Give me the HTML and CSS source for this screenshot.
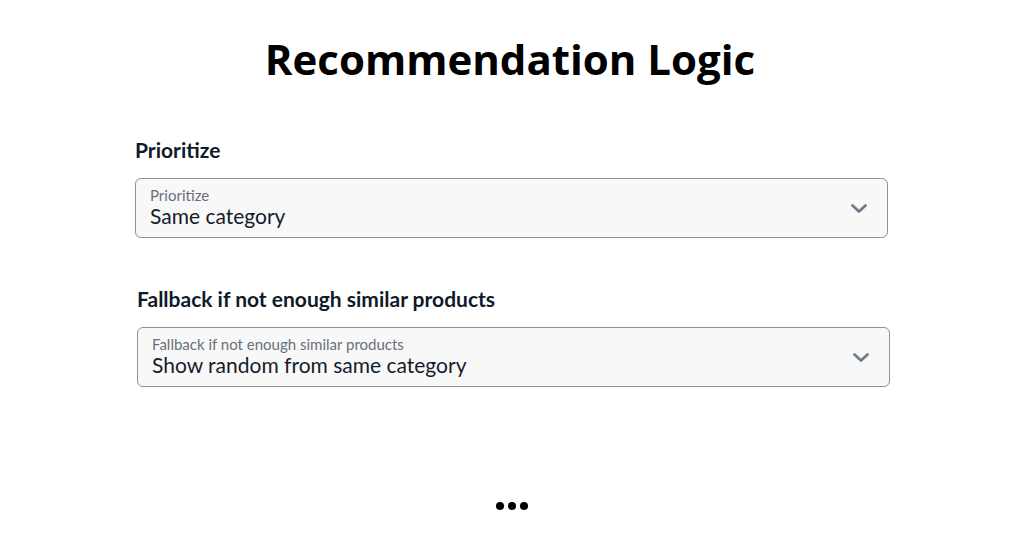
FILE: index.html
```html
<!DOCTYPE html>
<html>
<head>
<meta charset="utf-8">
<link rel="stylesheet" href="styles.css">
</head>
<body>
<main class="page">
  <h1 class="title">Recommendation Logic</h1>
  <section class="field first">
    <h2 class="field-title">Prioritize</h2>
    <div class="select">
      <div class="select-text">
        <span class="select-label">Prioritize</span>
        <span class="select-value">Same category</span>
      </div>
      <svg class="chevron" width="18" height="11" viewBox="0 0 18 11"><path d="M2.5 2.5 L9 8.5 L15.5 2.5" fill="none" stroke="#6f7d8b" stroke-width="2.8" stroke-linecap="round" stroke-linejoin="round"/></svg>
    </div>
  </section>
  <section class="field second">
    <h2 class="field-title">Fallback if not enough similar products</h2>
    <div class="select">
      <div class="select-text">
        <span class="select-label">Fallback if not enough similar products</span>
        <span class="select-value">Show random from same category</span>
      </div>
      <svg class="chevron" width="18" height="11" viewBox="0 0 18 11"><path d="M2.5 2.5 L9 8.5 L15.5 2.5" fill="none" stroke="#6f7d8b" stroke-width="2.8" stroke-linecap="round" stroke-linejoin="round"/></svg>
    </div>
  </section>
  <div class="dots"><span></span><span></span><span></span></div>
</main>
</body>
</html>
```
FILE: styles.css
```css
html, body {
  margin: 0;
  padding: 0;
  background: #ffffff;
}
.page {
  width: 1024px;
  height: 538px;
  display: flex;
  flex-direction: column;
  align-items: center;
  box-sizing: border-box;
  padding-top: 30px;
}
.title {
  margin: 0 4px 0 0;
  font-family: "Open Sans", sans-serif;
  font-weight: 700;
  font-size: 42px;
  line-height: 58px;
  color: #000;
  letter-spacing: 0;
}
.field {
  width: 753px;
  display: flex;
  flex-direction: column;
}
.first {
  margin-top: 50px;
  margin-right: 1px;
}
.second {
  margin-top: 49px;
  margin-left: 3px;
}
.field-title {
  margin: 0 0 16px 0;
  font-family: Lato, sans-serif;
  font-weight: 700;
  font-size: 21px;
  line-height: 24px;
  color: #0f1a2a;
}
.select {
  height: 60px;
  box-sizing: border-box;
  border: 1px solid #8c939c;
  border-radius: 6px;
  background: #f8f8f8;
  display: flex;
  align-items: center;
  justify-content: space-between;
  padding: 0 19px 2px 14px;
}
.select-text {
  display: flex;
  flex-direction: column;
  font-family: Lato, sans-serif;
}
.select-label {
  font-size: 15px;
  line-height: 16px;
  color: #66707c;
}
.select-value {
  font-size: 21px;
  line-height: 25px;
  color: #141c2a;
}
.chevron {
  display: block;
  margin-top: 2px;
}
.dots {
  margin-top: 115px;
  display: flex;
  gap: 4px;
}
.dots span {
  width: 8px;
  height: 8px;
  border-radius: 50%;
  background: #000;
}
```
